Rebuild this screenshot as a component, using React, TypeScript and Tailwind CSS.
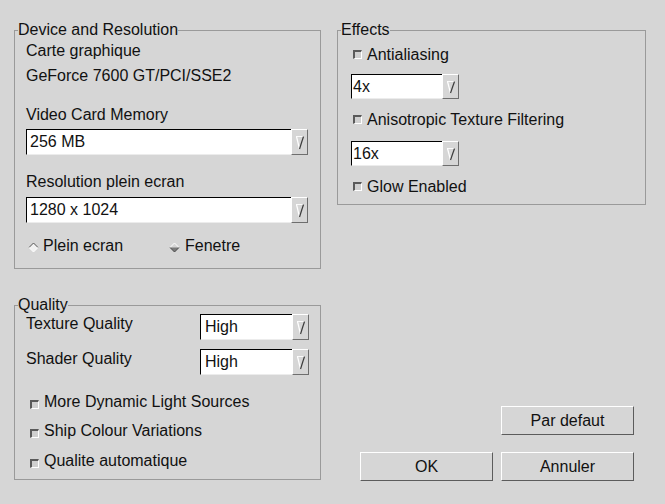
import React from "react";

function Arrow({ h }: { h: number }) {
  const ih = h - 2;
  return (
    <div className="w-[17px] h-full border-t border-l border-t-white border-l-white border-b border-r border-b-[#6e6e6e] border-r-[#6e6e6e] bg-[#d6d6d6]">
      <svg width="15" height={ih} className="block">
        <line x1="4" y1="6.5" x2="12" y2="6.5" stroke="#fafafa" strokeWidth="1" />
        <line x1="4.5" y1="6.5" x2="7.5" y2={ih - 5} stroke="#ffffff" strokeWidth="1.2" />
        <line x1="11.5" y1="6.5" x2="7.5" y2={ih - 5} stroke="#3c3c3c" strokeWidth="1.2" />
      </svg>
    </div>
  );
}

function Combo({
  value,
  outer,
  field,
  h,
}: {
  value: string;
  outer: string;
  field: string;
  h: number;
}) {
  return (
    <div className={"flex " + outer}>
      <div className={field}>{value}</div>
      <Arrow h={h} />
    </div>
  );
}

function Check({ label, top }: { label: string; top: string }) {
  return (
    <div className="flex items-start h-[18px]">
      <div
        className={
          "w-[9px] h-[9px] shrink-0 border-t-2 border-l-2 border-t-[#5a5a5a] border-l-[#5a5a5a] border-b border-r border-b-white border-r-white bg-[#d0d0d0] " +
          top
        }
      />
      <span className="ml-[5px] whitespace-nowrap">{label}</span>
    </div>
  );
}

function Btn({ label }: { label: string }) {
  return (
    <div className="w-[133px] h-[29px] flex items-center justify-center border-t border-l border-t-white border-l-white border-b border-r border-b-[#5c5c5c] border-r-[#5c5c5c] bg-[#d6d6d6]">
      {label}
    </div>
  );
}

const FIELD =
  "flex-1 bg-white border-t border-l border-t-black border-l-black border-b border-b-[#ececec] pt-[3px] ";

export default function App() {
  return (
    <div className="w-[665px] h-[504px] overflow-hidden bg-[#d6d6d6] text-[#111] font-['Liberation_Sans',Arial,sans-serif] text-[16px] leading-[18px] flex pl-[14px] pt-[21px] gap-[16px]">
      {/* Left column */}
      <div className="w-[307px] flex flex-col">
        <fieldset className="w-[307px] border border-[#9a9a9a] pl-[11px] pr-[12px] pb-[13px] flex flex-col">
          <legend className="ml-[-8px] leading-[18px]">Device and Resolution</legend>
          <div className="mt-[3px] h-[18px]">Carte graphique</div>
          <div className="mt-[7px] h-[18px]">GeForce 7600 GT/PCI/SSE2</div>
          <div className="mt-[21px] h-[18px]">Video Card Memory</div>
          <Combo value="256 MB" h={26} outer="mt-[5px] h-[26px] w-[282px]" field={FIELD + "pl-[3px]"} />
          <div className="mt-[18px] h-[18px]">Resolution plein ecran</div>
          <Combo value="1280 x 1024" h={26} outer="mt-[6px] h-[26px] w-[282px]" field={FIELD + "pl-[3px]"} />
          <div className="mt-[14px] h-[18px] flex">
            <div className="w-[143px] flex items-center">
              <svg width="11" height="11" className="ml-[2px] mt-[2px] block">
                <polygon points="5.5,1 10,5.5 5.5,10 1,5.5" fill="#f2f2f2" />
                <polyline points="1,5.5 5.5,1 10,5.5" stroke="#555" fill="none" />
                <polyline points="1,5.5 5.5,10 10,5.5" stroke="#ffffff" fill="none" />
              </svg>
              <span className="ml-[4px]">Plein ecran</span>
            </div>
            <div className="flex items-center">
              <svg width="11" height="11" className="mt-[3px] block">
                <polygon points="1,5.5 10,5.5 5.5,10" fill="#7c7c7c" />
                <polyline points="1,5.5 5.5,1 10,5.5" stroke="#ffffff" fill="none" />
                <polyline points="1,5.5 5.5,10 10,5.5" stroke="#4a4a4a" fill="none" />
              </svg>
              <span className="ml-[5px]">Fenetre</span>
            </div>
          </div>
        </fieldset>

        <fieldset className="mt-[27px] w-[307px] border border-[#9a9a9a] pl-[11px] pr-[11px] pb-[9px] flex flex-col">
          <legend className="ml-[-8px] leading-[18px]">Quality</legend>
          <div className="flex justify-between items-start">
            <span className="mt-[1px]">Texture Quality</span>
            <Combo value="High" h={26} outer="h-[26px] w-[109px]" field={FIELD + "pl-[4px]"} />
          </div>
          <div className="mt-[9px] flex justify-between items-start">
            <span className="mt-[1px]">Shader Quality</span>
            <Combo value="High" h={26} outer="h-[26px] w-[109px]" field={FIELD + "pl-[4px]"} />
          </div>
          <div className="mt-[18px] pl-[4px]">
            <Check label="More Dynamic Light Sources" top="mt-[7px]" />
          </div>
          <div className="mt-[11px] pl-[4px]">
            <Check label="Ship Colour Variations" top="mt-[7px]" />
          </div>
          <div className="mt-[12px] pl-[4px]">
            <Check label="Qualite automatique" top="mt-[7px]" />
          </div>
        </fieldset>
      </div>

      {/* Right column */}
      <div className="w-[309px] flex flex-col pb-[23px]">
        <fieldset className="w-[309px] border border-[#9a9a9a] pl-[13px] pb-[8px] flex flex-col">
          <legend className="ml-[-10px] leading-[18px]">Effects</legend>
          <div className="mt-[7px] pl-[2px]">
            <Check label="Antialiasing" top="mt-[4px]" />
          </div>
          <Combo value="4x" h={25} outer="mt-[10px] h-[25px] w-[108px]" field={FIELD + "pl-[1px]"} />
          <div className="mt-[12px] pl-[2px]">
            <Check label="Anisotropic Texture Filtering" top="mt-[4px]" />
          </div>
          <Combo value="16x" h={25} outer="mt-[12px] h-[25px] w-[108px]" field={FIELD + "pl-[1px]"} />
          <div className="mt-[12px] pl-[2px]">
            <Check label="Glow Enabled" top="mt-[4px]" />
          </div>
        </fieldset>

        <div className="mt-auto flex flex-col items-end pr-[12px] gap-[17px]">
          <Btn label="Par defaut" />
          <div className="flex gap-[8px]">
            <Btn label="OK" />
            <Btn label="Annuler" />
          </div>
        </div>
      </div>
    </div>
  );
}
